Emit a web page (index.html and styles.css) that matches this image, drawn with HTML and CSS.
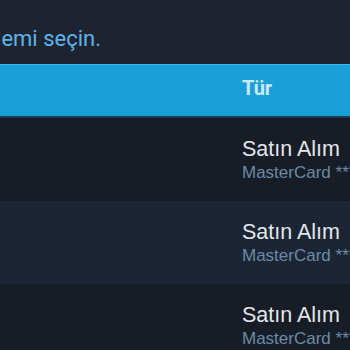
FILE: index.html
```html
<!DOCTYPE html>
<html lang="tr">
<head>
    <meta charset="UTF-8">
    <title>İşlem seçin</title>
    <link rel="stylesheet" href="styles.css">
</head>
<body>
    <div class="intro">
        <p>Lütfen yardıma ihtiyacınız olan işlemi seçin.</p>
    </div>
    <div class="table">
        <div class="head">
            <div class="cell"></div>
            <div class="cell">Tür</div>
        </div>
        <div class="row">
            <div class="cell"></div>
            <div class="cell">
                <div class="type">Satın Alım</div>
                <div class="method">MasterCard ***4821</div>
            </div>
        </div>
        <div class="row alt">
            <div class="cell"></div>
            <div class="cell">
                <div class="type">Satın Alım</div>
                <div class="method">MasterCard ***4821</div>
            </div>
        </div>
        <div class="row">
            <div class="cell"></div>
            <div class="cell">
                <div class="type">Satın Alım</div>
                <div class="method">MasterCard ***4821</div>
            </div>
        </div>
    </div>
</body>
</html>
```

FILE: styles.css
```css
body{
    margin: 0;
    background-color: #1e2330;
    overflow: hidden;
    white-space: nowrap;
}
/* üst açıklama */
.intro{
    width: 101px;
    height: 64px;
    display: flex;
    justify-content: flex-end;
}
.intro p{
    margin: 0;
    padding-top: 26px;
    font-family: Roboto, Arial, sans-serif;
    font-size: 22px;
    line-height: 26px;
    color: #5db3ea;
}
/* tablo */
.head, .row{
    display: grid;
    grid-template-columns: 242px 1fr;
}
.head{
    height: 51px;
    background-color: #1a9fd9;
    border-top: 1px solid #3ab5ea;
    border-bottom: 2px solid #163a58;
}
.head .cell{
    padding-top: 11px;
    font-family: Roboto, Arial, sans-serif;
    font-weight: bold;
    font-size: 20px;
    line-height: 24px;
    color: #cbe9f8;
}
.row{
    height: 83px;
    background-color: #171d26;
}
.row.alt{
    background-color: #1c2533;
}
.row .cell{
    padding-top: 19px;
    font-family: "Liberation Sans", Arial, sans-serif;
}
.type{
    font-size: 21.5px;
    line-height: 24px;
    color: #e2e6ea;
}
.method{
    margin-top: 2px;
    font-size: 17px;
    line-height: 20px;
    color: #6b8aa6;
}
```
